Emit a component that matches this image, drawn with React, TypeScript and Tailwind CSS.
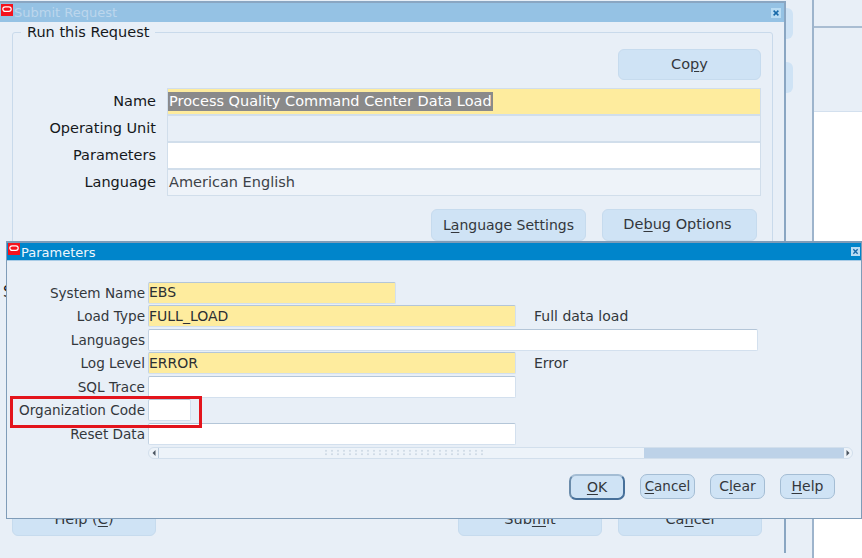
import React from "react";

const font = { fontFamily: '"DejaVu Sans", Verdana, sans-serif' };

function OracleIcon({ className }: { className: string }) {
  return (
    <svg viewBox="0 0 12 12" className={className} aria-hidden="true">
      <rect width="12" height="12" fill="#f5121c" />
      <rect x="1.8" y="2.8" width="8.4" height="4.6" rx="2.3" fill="none" stroke="#ffffff" strokeWidth="1.2" />
    </svg>
  );
}

function CloseIcon({ className }: { className: string }) {
  return (
    <svg viewBox="0 0 10 10" className={className} aria-hidden="true">
      <rect width="10" height="10" fill="#b9dcf3" />
      <path d="M2.6 2.6 L7.4 7.4 M7.4 2.6 L2.6 7.4" stroke="#1668a8" strokeWidth="1.5" />
    </svg>
  );
}

function Mn({ children }: { children: React.ReactNode }) {
  return <span className="underline underline-offset-2 decoration-1">{children}</span>;
}

function BigButton({ className, children }: { className: string; children: React.ReactNode }) {
  return (
    <div className={`flex items-center justify-center rounded-[6px] border border-[#c6dbee] bg-[#cfe3f5] text-[14.5px] text-[#33373c] ${className}`}>
      {children}
    </div>
  );
}

function SmallButton({ className, children }: { className: string; children: React.ReactNode }) {
  return (
    <div className={`flex h-[25px] w-[55px] items-center justify-center rounded-[7px] border border-[#a4bdd4] bg-[#cfe3f5] pt-[1px] text-[14px] text-[#33373c] ${className}`}>
      {children}
    </div>
  );
}

function MainRow({ label, className, children }: { label: string; className: string; children?: React.ReactNode }) {
  return (
    <div className="flex items-center">
      <div className="w-[143px] shrink-0 text-right text-[14.5px] text-[#15181b]">{label}</div>
      <div className={`ml-[11px] h-[27px] w-[594px] border ${className}`}>{children}</div>
    </div>
  );
}

function ParamRow({
  label,
  width,
  tone,
  value,
  note,
}: {
  label: string;
  width: string;
  tone: string;
  value?: string;
  note?: string;
}) {
  return (
    <div className="flex h-[23.5px] items-center">
      <div className="w-[138px] shrink-0 text-right text-[13.6px] text-[#33373c]">{label}</div>
      <div className={`ml-[3px] flex h-[22px] shrink-0 items-center rounded-[2px] border border-t-[#b4c6d8] border-r-[#d3e0ee] border-b-[#d3e0ee] border-l-[#c3d3e3] text-[14px] text-[#2b2f33] ${width} ${tone}`}>
        {value}
      </div>
      {note && <div className="ml-[18px] text-[14px] text-[#33373c]">{note}</div>}
    </div>
  );
}

export default function App() {
  const yellow = "bg-[#feec9e]";
  const white = "bg-white";
  return (
    <div className="relative h-[558px] w-[862px] overflow-hidden bg-[#e8eff7]" style={font}>
      {/* Window behind everything, on the right */}
      <div className="absolute left-[812px] top-0 h-[558px] w-[50px] border-l-2 border-[#9db4cc] bg-white">
        <div className="h-[28px] border-b-2 border-[#a9bdd2] bg-[#e8eff7]" />
        <div className="h-[84px] border-b border-[#d3e0ee] bg-[#e8eff7]" />
      </div>
      <div className="absolute left-[780px] top-[8px] h-[31px] w-[13px] rounded-[6px] bg-[#cfe3f5]" />
      <div className="absolute left-[780px] top-[62px] h-[31px] w-[13px] rounded-[6px] bg-[#cfe3f5]" />

      {/* Submit Request window */}
      <div className="absolute left-0 top-[1px] flex h-[552px] w-[786px] flex-col border-t-2 border-r-2 border-[#8aa6c2] bg-[#e8eff7]">
        <div className="flex h-[19px] shrink-0 items-center bg-[#95c2e4]">
          <OracleIcon className="ml-[1px] mt-[1px] h-[12px] w-[12px] shrink-0 self-start" />
          <div className="ml-[1px] pt-[1px] text-[13px] text-[#bcd6ec]">Submit Request</div>
          <CloseIcon className="ml-auto mr-[3px] h-[10px] w-[10px]" />
        </div>
        <div className="relative ml-[12px] mr-[11px] mt-[10px] h-[300px] shrink-0 rounded-[3px] border border-[#c9daeb] pt-[16px]">
          <div className="absolute -top-[10px] left-[8px] bg-[#e8eff7] px-[6px] text-[14.5px] leading-[18px] text-[#15181b]">Run this Request</div>
          <div className="flex justify-end pr-[11px]">
            <BigButton className="h-[31px] w-[143px]">
              <span>
                Co<Mn>p</Mn>y
              </span>
            </BigButton>
          </div>
          <div className="mt-[8px] flex flex-col">
            <MainRow label="Name" className="border-[#d1deeb] bg-[#feec9e]">
              <div className="flex h-full items-center">
                <span className="whitespace-nowrap bg-[#8a8a8a] px-[1px] text-[14.5px] leading-[19px] text-white">
                  Process Quality Command Center Data Load
                </span>
              </div>
            </MainRow>
            <MainRow label="Operating Unit" className="border-[#d1deeb] bg-[#e8eff7]" />
            <MainRow label="Parameters" className="border-[#d1deeb] bg-white" />
            <MainRow label="Language" className="border-[#d1deeb] bg-[#eef3f9]">
              <div className="flex h-full items-center pl-[1px] text-[14.5px] text-[#3d4248]">American English</div>
            </MainRow>
          </div>
          <div className="mt-[13px] flex pl-[418px]">
            <BigButton className="h-[32px] w-[155px]">
              <span className="text-[14px]">
                L<Mn>a</Mn>nguage Settings
              </span>
            </BigButton>
            <BigButton className="ml-[16px] h-[32px] w-[155px]">
              <span className="pr-[4px]">
                De<Mn>b</Mn>ug Options
              </span>
            </BigButton>
          </div>
        </div>
        <div className="absolute left-[3px] top-[278px] text-[15px] text-[#15181b]">S</div>
        <div className="mb-[17px] mt-auto flex px-[12px]">
          <BigButton className="h-[32px] w-[144px]">
            <span>
              Help (<Mn>C</Mn>)
            </span>
          </BigButton>
          <BigButton className="ml-[302px] h-[32px] w-[144px]">
            <span>
              Sub<Mn>m</Mn>it
            </span>
          </BigButton>
          <BigButton className="ml-[16px] h-[32px] w-[144px]">
            <span>
              Ca<Mn>n</Mn>cel
            </span>
          </BigButton>
        </div>
      </div>

      {/* Parameters window */}
      <div className="absolute left-[6px] top-[241px] flex h-[278px] w-[856px] flex-col border border-t-2 border-[#7f9cb8] bg-[#e8eff7]">
        <div className="flex h-[18px] shrink-0 items-center border-b border-[#a8cbe6] bg-[#0085cb]">
          <OracleIcon className="ml-[1px] h-[12px] w-[12px] shrink-0 self-start" />
          <div className="ml-[1px] pt-[2px] text-[13px] text-[#eef6fc]">Parameters</div>
          <CloseIcon className="ml-auto mr-[1px] h-[9px] w-[9px]" />
        </div>
        <div className="mt-[20px] flex flex-col">
          <ParamRow label="System Name" width="w-[248px]" tone={yellow} value="EBS" />
          <ParamRow label="Load Type" width="w-[368px]" tone={yellow} value="FULL_LOAD" note="Full data load" />
          <ParamRow label="Languages" width="w-[610px]" tone={white} />
          <ParamRow label="Log Level" width="w-[368px]" tone={yellow} value="ERROR" note="Error" />
          <ParamRow label="SQL Trace" width="w-[368px]" tone={white} />
          <div className="relative">
            <ParamRow label="Organization Code" width="w-[43px]" tone={white} />
            <div className="absolute left-[3px] top-[-3px] h-[32px] w-[192px] border-[3px] border-[#e3141c]" />
          </div>
          <ParamRow label="Reset Data" width="w-[368px]" tone={white} />
        </div>
        <div className="ml-[141px] mt-[1px] flex h-[12px] w-[705px] items-center overflow-hidden rounded-full border border-[#d2dfec] bg-[#edf3f9]">
          <div className="flex h-full w-[10px] shrink-0 items-center justify-center border-r border-[#b9cbdd]">
            <svg viewBox="0 0 4 6" className="h-[6px] w-[4px]" aria-hidden="true">
              <path d="M3.5 0 L0.5 3 L3.5 6 Z" fill="#4a5560" />
            </svg>
          </div>
          <div className="ml-[164px] h-[7px] w-[160px] shrink-0 bg-[radial-gradient(#b4c4d4_0.8px,transparent_1px)] bg-[length:6px_3.5px]" />
          <div className="ml-[161px] h-full w-[200px] shrink-0 bg-[#bdd2e8]" />
          <div className="flex h-full flex-1 items-center justify-center">
            <svg viewBox="0 0 4 6" className="h-[6px] w-[4px]" aria-hidden="true">
              <path d="M0.5 0 L3.5 3 L0.5 6 Z" fill="#4a5560" />
            </svg>
          </div>
        </div>
        <div className="mt-[15px] flex justify-end pr-[26px]">
          <SmallButton className="h-[26px] w-[56px] border-2 border-t-[#a4bdd4] border-l-[#6b8cab] border-r-[#47709a] border-b-[#47709a]">
            <span>
              <Mn>O</Mn>K
            </span>
          </SmallButton>
          <SmallButton className="ml-[15px]">
            <span className="text-[13.5px]">
              <Mn>C</Mn>ancel
            </span>
          </SmallButton>
          <SmallButton className="ml-[15px]">
            <span>
              C<Mn>l</Mn>ear
            </span>
          </SmallButton>
          <SmallButton className="ml-[15px]">
            <span>
              <Mn>H</Mn>elp
            </span>
          </SmallButton>
        </div>
      </div>
    </div>
  );
}
